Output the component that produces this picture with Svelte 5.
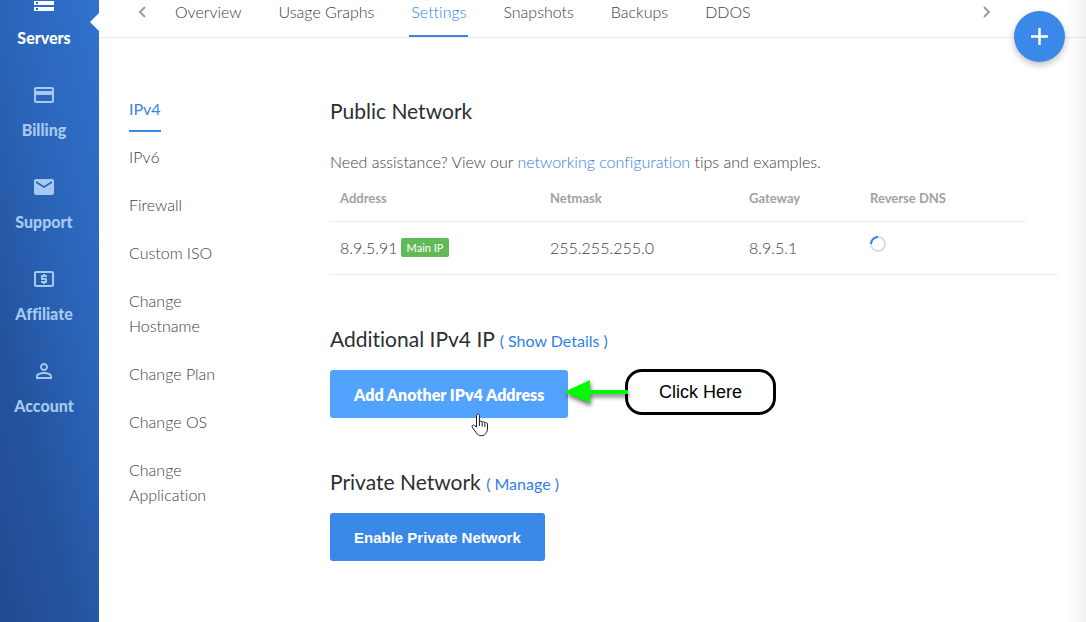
<script>
  const sections = ['Servers', 'Billing', 'Support', 'Affiliate', 'Account'];
  const tabs = ['Overview', 'Usage Graphs', 'Settings', 'Snapshots', 'Backups', 'DDOS'];
  const settings = [
    'IPv4',
    'IPv6',
    'Firewall',
    'Custom ISO',
    'Change Hostname',
    'Change Plan',
    'Change OS',
    'Change Application'
  ];
  const icons = {
    Servers: 'M2 20h20v-4H2v4zm2-3h2v2H4v-2zM2 4v4h20V4H2zm4 3H4V5h2v2zm-4 7h20v-4H2v4zm2-3h2v2H4v-2z',
    Billing: 'M20 4H4c-1.11 0-1.99.89-1.99 2L2 18c0 1.11.89 2 2 2h16c1.11 0 2-.89 2-2V6c0-1.11-.89-2-2-2zm0 14H4v-6h16v6zm0-10H4V6h16v2z',
    Support: 'M20 4H4c-1.1 0-1.99.9-1.99 2L2 18c0 1.1.9 2 2 2h16c1.1 0 2-.9 2-2V6c0-1.1-.9-2-2-2zm0 4l-8 5-8-5V6l8 5 8-5v2z',
    Affiliate: 'M11 17h2v-1h1c.55 0 1-.45 1-1v-3c0-.55-.45-1-1-1h-3v-1h4V8h-2V7h-2v1h-1c-.55 0-1 .45-1 1v3c0 .55.45 1 1 1h3v1H9v2h2v1zm9-13H4c-1.11 0-1.99.89-1.99 2L2 18c0 1.11.89 2 2 2h16c1.11 0 2-.89 2-2V6c0-1.11-.89-2-2-2zm0 14H4V6h16v12z',
    Account: 'M12 5.9a2.1 2.1 0 110 4.2 2.1 2.1 0 010-4.2m0 9c2.97 0 6.1 1.46 6.1 2.1v1.1H5.9V17c0-.64 3.13-2.1 6.1-2.1M12 4C9.79 4 8 5.79 8 8s1.79 4 4 4 4-1.79 4-4-1.79-4-4-4zm0 9c-2.67 0-8 1.34-8 4v3h16v-3c0-2.66-5.33-4-8-4z'
  };
</script>

<div class="app">
  <nav class="sidebar" aria-label="Main">
    {#each sections as name}
      <a href="#{name}" class:current={name === 'Servers'}>
        <svg viewBox="0 0 24 24" width="24" height="24" aria-hidden="true"><path d={icons[name]} /></svg>
        <span>{name}</span>
      </a>
    {/each}
  </nav>

  <div class="page">
    <header>
      <button class="arrow" aria-label="Previous tabs">
        <svg viewBox="0 0 10 12" width="10" height="12"><path d="M8 1 3 6l5 5" /></svg>
      </button>
      <nav class="tabs" aria-label="Server">
        {#each tabs as tab}
          <a href="#{tab}" class:active={tab === 'Settings'}>{tab}</a>
        {/each}
      </nav>
      <button class="arrow" aria-label="Next tabs">
        <svg viewBox="0 0 10 12" width="10" height="12"><path d="m2 1 5 5-5 5" /></svg>
      </button>
    </header>

    <div class="body">
      <nav class="subnav" aria-label="Settings">
        {#each settings as item}
          <a href="#{item}" class:active={item === 'IPv4'}>{item}</a>
        {/each}
      </nav>

      <main>
        <section>
          <h2>Public Network</h2>
          <p>Need assistance? View our <a href="#docs">networking configuration</a> tips and examples.</p>
          <table>
            <colgroup>
              <col class="c-address" /><col class="c-mask" /><col class="c-gateway" /><col /><col class="c-end" />
            </colgroup>
            <thead>
              <tr><th>Address</th><th>Netmask</th><th>Gateway</th><th>Reverse DNS</th><td></td></tr>
            </thead>
            <tbody>
              <tr>
                <td><div class="address">8.9.5.91 <span class="tag">Main IP</span></div></td>
                <td>255.255.255.0</td>
                <td>8.9.5.1</td>
                <td>
                  <svg class="spinner" viewBox="0 0 16 16" width="16" height="16" role="img" aria-label="Loading">
                    <circle cx="8" cy="8" r="7" />
                    <path d="M1 8a7 7 0 0 1 7-7" />
                  </svg>
                </td>
                <td></td>
              </tr>
            </tbody>
          </table>
        </section>

        <section>
          <h2>Additional IPv4 IP <a href="#details">( Show Details )</a></h2>
          <div class="action">
            <button class="primary hovered">Add Another IPv4 Address</button>
            <svg class="pointer" viewBox="0 0 18 24" width="18" height="24" aria-hidden="true">
              <path d="M5.5 14V2.6c0-2 2.9-2 2.9 0V9c.2-1.3 2.6-1.2 2.8.4.5-1.1 2.6-.9 2.7.7.7-1 2.6-.6 2.6 1v5.2c0 1.3-.5 2-1.2 3.2-.8 2-2.5 3.2-5 3.2-2.4 0-3.8-.9-5-2.8l-4-5.7c-1-1.5.7-2.9 2-1.7z" />
              <path d="M8.4 9v4M11.2 9.5v4M13.9 10.5v3.5" />
            </svg>
            <div class="callout">
              <svg viewBox="0 0 66 34" width="66" height="34" aria-hidden="true">
                <path d="M2 17 28 5v10h38v4H28v9z" />
              </svg>
              <div class="bubble">Click Here</div>
            </div>
          </div>
        </section>

        <section>
          <h2>Private Network <a href="#manage">( Manage )</a></h2>
          <button class="primary system">Enable Private Network</button>
        </section>
      </main>
    </div>
  </div>

  <button class="add" aria-label="Add">
    <svg viewBox="0 0 17 17" width="17" height="17"><path d="M8.5 0v17M0 8.500h17" /></svg>
  </button>
</div>

<style>
  :global(body) {
    margin: 0;
    background: #fff;
  }
  .app {
    position: relative;
    display: flex;
    min-height: 100vh;
    overflow: hidden;
    color: #3e4145;
    font: 300 16px/25px Lato, 'Open Sans', sans-serif;
    font-variant-ligatures: none;
  }
  .app::after {
    content: '';
    position: absolute;
    inset: 0 0 0 auto;
    width: 20px;
    background: linear-gradient(to right, rgba(0, 0, 0, 0), rgba(0, 0, 0, 0.05));
    pointer-events: none;
  }
  a {
    color: #2f7fe6;
    text-decoration: none;
  }
  button {
    display: block;
    border: 0;
    padding: 0;
    cursor: pointer;
  }
  .sidebar {
    flex: none;
    width: 99px;
    box-sizing: border-box;
    padding-right: 11px;
    background: linear-gradient(256deg, #3072ce 0%, #2b65b9 38%, #24549f 70%, #214b90 100%);
  }
  .sidebar a {
    position: relative;
    display: flex;
    flex-direction: column;
    align-items: center;
    gap: 10px;
    height: 92px;
    color: #a6c9f1;
    font-size: 16px;
    font-weight: 900;
  }
  .sidebar a:first-child {
    margin-top: -9px;
  }
  .sidebar svg {
    fill: currentColor;
  }
  .sidebar .current {
    color: #fff;
  }
  .current::after {
    content: '';
    position: absolute;
    top: 22px;
    right: -11px;
    border: 9px solid transparent;
    border-right-color: #fff;
    border-left: 0;
  }
  .page {
    flex: 1;
    min-width: 0;
  }
  header {
    display: flex;
    align-items: flex-start;
    height: 37px;
    padding: 0 94px 0 38px;
    border-bottom: 1px solid #ebebeb;
  }
  .arrow {
    display: flex;
    align-items: center;
    height: 24px;
    background: none;
  }
  .arrow path {
    fill: none;
    stroke: #999ea6;
    stroke-width: 2;
  }
  .tabs {
    display: flex;
    flex: 1;
    gap: 33px;
    padding-left: 26px;
    line-height: 24px;
  }
  .tabs a {
    height: 35px;
    padding: 0 2px;
    color: inherit;
  }
  .tabs .active {
    border-bottom: 2px solid #3a87e8;
    color: #2f7fe6;
  }
  .body {
    display: flex;
    padding: 58px 28px 40px 30px;
  }
  .subnav {
    display: flex;
    flex: none;
    flex-direction: column;
    align-items: flex-start;
    gap: 23px;
    width: 112px;
    margin-right: 89px;
  }
  .subnav a {
    color: inherit;
  }
  .subnav .active {
    margin-bottom: -11px;
    padding-bottom: 9px;
    border-bottom: 2px solid #3a87e8;
    color: #3a87e8;
    font-weight: 400;
  }
  main {
    display: flex;
    flex: 1;
    flex-direction: column;
    gap: 52px;
    min-width: 0;
    padding-top: 3px;
  }
  h2 {
    margin: 0 0 19px;
    color: #2b2f33;
    font-size: 21px;
    font-weight: 400;
    line-height: 24px;
  }
  h2 a {
    font-size: 16px;
    line-height: 16px;
  }
  p {
    margin: 26px 0 0;
  }
  table {
    width: 100%;
    border-collapse: separate;
    border-spacing: 0;
    table-layout: fixed;
  }
  .c-address {
    width: 210px;
  }
  .c-mask {
    width: 199px;
  }
  .c-gateway {
    width: 121px;
  }
  .c-end {
    width: 32px;
  }
  th {
    height: 45px;
    padding: 2px 10px 0;
    border-bottom: 1px solid #ebebeb;
    color: #a0a2a5;
    font-size: 13px;
    font-weight: 700;
    text-align: left;
  }
  thead td {
    border: 0;
  }
  td {
    padding: 0 10px;
  }
  tbody td {
    height: 50px;
    padding-bottom: 2px;
    border-bottom: 1px solid #ebebeb;
  }
  .address {
    display: flex;
    align-items: center;
    gap: 3px;
  }
  .tag {
    padding: 0 6px;
    border-radius: 2px;
    background: #62b958;
    color: #fff;
    font-size: 11px;
    font-weight: 400;
    line-height: 19px;
  }
  .spinner {
    display: block;
    margin-bottom: 6px;
    fill: none;
    stroke: #dedede;
    stroke-width: 2;
  }
  .spinner path {
    stroke: #3a87e8;
  }
  .action {
    position: relative;
    display: flex;
  }
  .primary {
    height: 48px;
    padding: 0 24px;
    border-radius: 3px;
    background: #3a89e9;
    color: #fff;
    font: 800 16px Lato, sans-serif;
  }
  .hovered {
    background: #52a2ff;
  }
  .system {
    font: 700 15px 'Liberation Sans', Arial, sans-serif;
  }
  .pointer {
    position: absolute;
    top: 43px;
    left: 141px;
    fill: #fff;
    stroke: #1c1c2b;
    stroke-linejoin: round;
  }
  .callout {
    position: absolute;
    top: -1px;
    left: 232px;
    display: flex;
    align-items: center;
  }
  .callout svg {
    margin-right: -3px;
    fill: #00fa00;
    filter: drop-shadow(1px 3px 2px rgba(0, 0, 0, 0.55));
  }
  .bubble {
    padding: 8px 31px;
    border: 3px solid #000;
    border-radius: 17px;
    background: #fff;
    color: #000;
    font: 400 18px/24px 'Liberation Sans', Arial, sans-serif;
    white-space: nowrap;
  }
  .add {
    position: absolute;
    top: 11px;
    right: 21px;
    display: grid;
    place-items: center;
    width: 51px;
    height: 51px;
    border-radius: 50%;
    background: #3a89e9;
    box-shadow: 0 3px 7px rgba(0, 0, 0, 0.25);
  }
  .add path {
    stroke: #fff;
    stroke-width: 2.5;
  }
</style>
